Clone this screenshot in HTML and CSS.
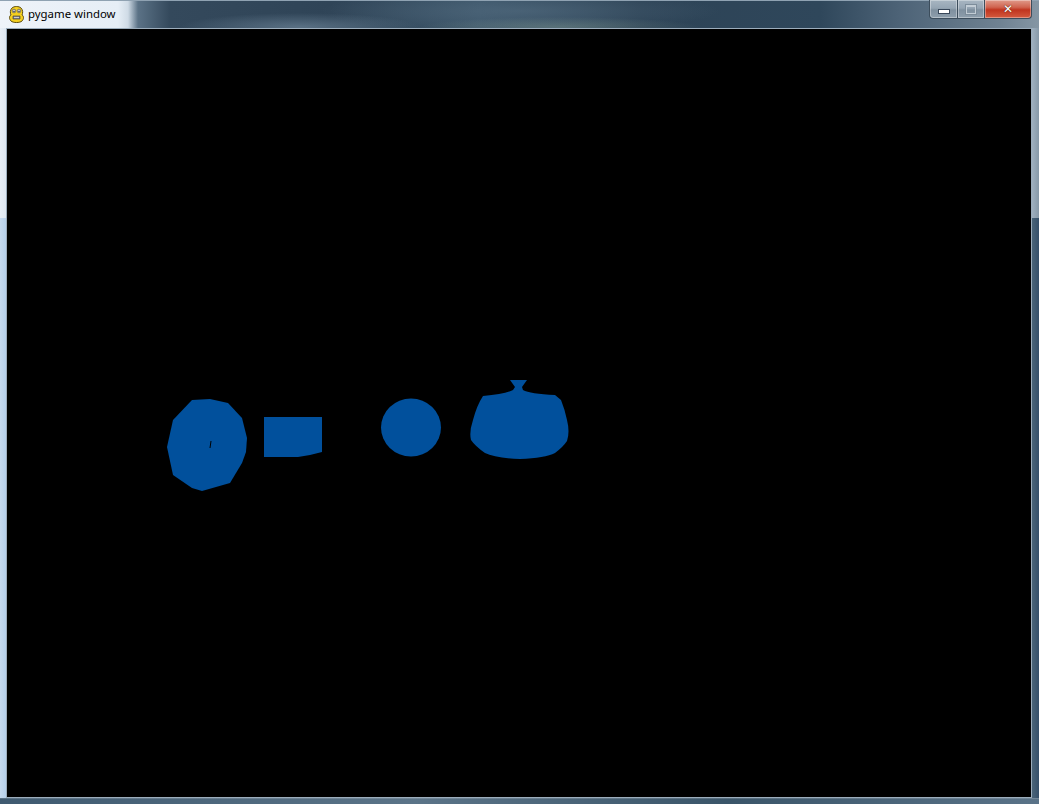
FILE: index.html
```html
<!DOCTYPE html>
<html>
<head>
<meta charset="utf-8">
<title>pygame window</title>
<link rel="stylesheet" href="styles.css">
</head>
<body>
<div class="window">
  <div class="titlebar">
    <div class="title">
      <svg class="appicon" width="17" height="17" viewBox="0 0 17 17">
        <path d="M4 2 C6 0 11 0 13 2 C15 4 15 7 14 9 C16 10 16 13 14 15 C12 17 5 17 3 15 C1 13 1 10 3 9 C2 7 2 4 4 2 Z" fill="#f5d020" stroke="#5a4a10" stroke-width="1"/>
        <circle cx="6" cy="5" r="1.8" fill="#fff" stroke="#333" stroke-width="0.6"/>
        <circle cx="11" cy="5" r="1.8" fill="#fff" stroke="#333" stroke-width="0.6"/>
        <circle cx="6" cy="5.2" r="0.8" fill="#111"/>
        <circle cx="11" cy="5.2" r="0.8" fill="#111"/>
        <path d="M5 10 H12 V13 H5 Z" fill="#888" stroke="#333" stroke-width="0.6"/>
        <path d="M6 11.5 H11" stroke="#ddd" stroke-width="0.8"/>
      </svg>
      <span class="title-text">pygame window</span>
    </div>
    <div class="controls">
      <div class="btn btn-min"><span class="glyph-min"></span></div>
      <div class="btn btn-max"><span class="glyph-max"></span></div>
      <div class="btn btn-close"><span class="glyph-close">✕</span></div>
    </div>
  </div>
  <div class="middle">
    <div class="side side-left"><div class="seg-top"></div><div class="seg-bottom"></div></div>
    <div class="canvas">
      <svg class="drawing" width="1024" height="768" viewBox="7 29 1024 768">
        <polygon fill="#01509c" points="192,400 210,399 228,403 242,418 247,438 246,452 242,463 230,483 202,491 192,488 173,475 167,447 173,420"/>
        <path d="M211,441 L210,448" stroke="#000" stroke-width="1"/>
        <polygon fill="#01509c" points="264,417 322,417 322,452 310,455 298,457 264,457"/>
        <ellipse cx="411" cy="427.5" rx="30" ry="29" fill="#01509c"/>
        <path fill="#01509c" d="M510,380 L527,380 L522,387 L523,390 Q530,394 555,395 L561,400 Q565,410 567,420 Q570,432 567,441 Q563,447 555,453 Q545,458 520,459 Q495,458 485,453 Q475,446 471,440 Q469,432 473,420 Q477,405 483,396 Q505,394 513,390 L515,387 Z"/>
      </svg>
    </div>
    <div class="side side-right"><div class="seg-top"></div><div class="seg-bottom"></div></div>
  </div>
  <div class="bottom"></div>
</div>
</body>
</html>
```

FILE: styles.css
```css
html, body {
  margin: 0;
  padding: 0;
  width: 1039px;
  height: 804px;
  overflow: hidden;
  background: #2e4558;
}

.window {
  width: 1039px;
  height: 804px;
  display: flex;
  flex-direction: column;
}

.titlebar {
  height: 28px;
  display: flex;
  justify-content: space-between;
  align-items: flex-start;
  border-top: 1px solid #8fa2b2;
  box-sizing: border-box;
  background:
    radial-gradient(ellipse 120px 14px at 300px 26px, rgba(140,165,185,0.45), rgba(140,165,185,0) 100%),
    radial-gradient(ellipse 140px 10px at 560px 26px, rgba(150,175,160,0.35), rgba(150,175,160,0) 100%),
    radial-gradient(ellipse 200px 20px at 520px 10px, rgba(90,115,135,0.5), rgba(90,115,135,0) 100%),
    linear-gradient(to right, #eef3f9 0px, #e6eef6 118px, #cfdbe6 128px, #5b7286 138px, #34495c 170px, #2f4457 330px, #3c5569 480px, #2d4356 640px, #2f475b 820px, #4d6377 900px, #6f8292 1000px, #8596a4 1039px);
}

.title {
  display: flex;
  align-items: center;
  padding-left: 8px;
  height: 26px;
}

.appicon {
  display: block;
  margin-right: 3px;
}

.title-text {
  font-family: "Noto Sans", "Open Sans", sans-serif;
  font-size: 11.4px;
  color: #000;
  margin-top: -1px;
}

.controls {
  display: flex;
  margin-right: 7px;
  margin-top: -1px;
}

.btn {
  height: 19px;
  box-sizing: border-box;
  display: flex;
  align-items: center;
  justify-content: center;
  border: 1px solid #3c4d5c;
  border-top: none;
  box-shadow: inset 0 0 0 1px rgba(255,255,255,0.35);
}

.btn-min {
  width: 28px;
  border-radius: 0 0 0 4px;
  border-right: none;
  background: linear-gradient(to bottom, #a8b6c2 0%, #95a5b3 45%, #7f909f 55%, #8e9eac 100%);
}

.btn-max {
  width: 27px;
  border-right: none;
  background: linear-gradient(to bottom, #a8b6c2 0%, #95a5b3 45%, #7f909f 55%, #8e9eac 100%);
}

.btn-close {
  width: 48px;
  border-radius: 0 0 4px 0;
  background: linear-gradient(to bottom, #e09a8a 0%, #d06450 40%, #c0351f 55%, #d45a3e 100%);
}

.glyph-min {
  display: block;
  width: 10px;
  height: 3px;
  margin-top: 5px;
  background: #fff;
  border: 1px solid #39485a;
}

.glyph-max {
  display: block;
  width: 8px;
  height: 6px;
  border: 1px solid #c8d2da;
  border-top-width: 2px;
  box-shadow: 0 0 0 1px #7a8a98;
  opacity: 0.9;
}

.glyph-close {
  font-family: "DejaVu Sans", sans-serif;
  font-weight: bold;
  font-size: 12px;
  line-height: 12px;
  color: #fff;
  text-shadow: 0 0 1px #5a2010, 0 0 1px #5a2010;
}

.middle {
  display: flex;
  height: 770px;
}

.side {
  display: flex;
  flex-direction: column;
}

.side-left {
  width: 6px;
}

.side-left .seg-top {
  height: 190px;
  background: linear-gradient(to right, #e7eef6, #dde7f1);
}

.side-left .seg-bottom {
  flex: 1;
  background: linear-gradient(to right, #c6daee, #b6d0ea);
}

.side-right {
  width: 7px;
}

.side-right .seg-top {
  height: 190px;
  background: linear-gradient(to right, #9fb0bf, #8799a8);
}

.side-right .seg-bottom {
  flex: 1;
  background: linear-gradient(to right, #4a6478, #36506a);
}

.canvas {
  width: 1024px;
  height: 768px;
  background: #000;
  border: 1px solid #9cadbc;
  position: relative;
}

.drawing {
  display: block;
  position: absolute;
  left: 0;
  top: 0;
}

.bottom {
  height: 6px;
  background: linear-gradient(to right, #3f5a70, #5b7488 40%, #3a5569 70%, #5a7388);
  border-top: 1px solid rgba(255,255,255,0.15);
  box-sizing: border-box;
}
```
